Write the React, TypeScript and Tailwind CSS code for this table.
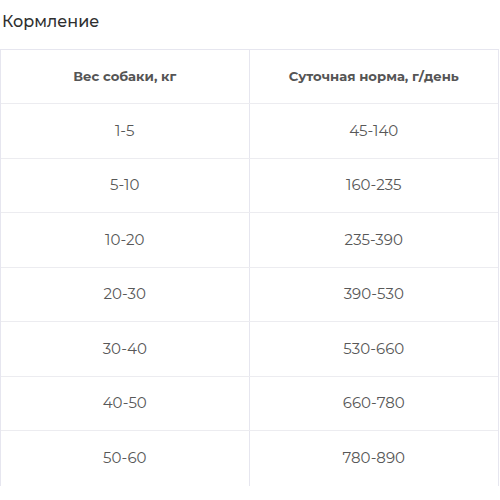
const rows: [string, string][] = [
  ['1-5', '45-140'],
  ['5-10', '160-235'],
  ['10-20', '235-390'],
  ['20-30', '390-530'],
  ['30-40', '530-660'],
  ['40-50', '660-780'],
  ['50-60', '780-890'],
];

export default function App() {
  return (
    <div className="w-[500px] h-[500px] bg-white font-['Montserrat','Noto_Sans',sans-serif]">
      {/* Title */}
      <h2 className="pl-[2px] pt-[10px] h-[49px] text-[16px] leading-[24px] font-medium text-[#2f2f2f]">
        Кормление
      </h2>

      {/* Feeding table */}
      <div className="w-[499px] border-l border-r border-t border-[#e6e6ef]">
        <div className="grid grid-cols-2 h-[54px] border-b border-[#ececf0]">
          <div className="flex items-center justify-center border-r border-[#e6e6ef] text-[13.2px] font-bold text-[#555]">
            Вес собаки, кг
          </div>
          <div className="flex items-center justify-center text-[13.2px] font-bold text-[#555]">
            Суточная норма, г/день
          </div>
        </div>
        {rows.map(([weight, norm], i) => (
          <div
            key={weight}
            className={
              'grid grid-cols-2 h-[54.5px] ' +
              (i < rows.length - 1 ? 'border-b border-[#ececf0]' : '')
            }
          >
            <div className="flex items-center justify-center border-r border-[#e6e6ef] text-[15px] text-[#585858]">
              {weight}
            </div>
            <div className="flex items-center justify-center text-[15px] text-[#585858]">{norm}</div>
          </div>
        ))}
      </div>
    </div>
  );
}
